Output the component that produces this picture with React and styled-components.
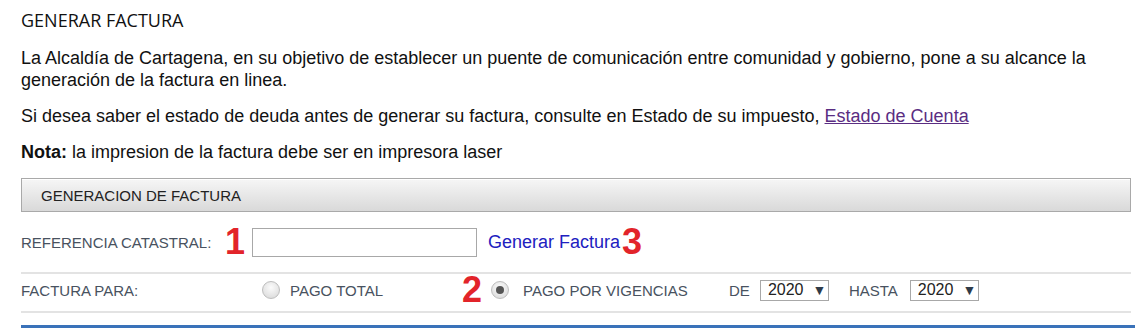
import React, { useState } from "react";
import styled, { createGlobalStyle } from "styled-components";

const Global = createGlobalStyle`
  body {
    margin: 0;
    background: #fff;
    font-family: "Liberation Sans", Arial, sans-serif;
    color: #111;
  }
`;

const Page = styled.div`
  padding: 10px 4px 0 21px;
`;

const Title = styled.h1`
  margin: 0;
  font-family: "Open Sans", "Liberation Sans", sans-serif;
  font-size: 18px;
  font-weight: 400;
  line-height: 20px;
  color: #111;
`;

const Para = styled.p`
  margin: ${p => p.$top || 14}px 0 0;
  font-size: 18px;
  line-height: 22px;
  max-width: 1100px;
`;

const Link = styled.a`
  color: #5a2d82;
  text-decoration: underline;
`;

const Panel = styled.div`
  margin-top: 15px;
`;

const PanelHead = styled.div`
  height: 32px;
  display: flex;
  align-items: center;
  padding-left: 19px;
  border: 1px solid #a9a9a9;
  background: linear-gradient(#f6f6f6, #d9d9d9);
  box-shadow: inset 0 1px 0 #fff;
  font-size: 15px;
  color: #222;
`;

const Row = styled.div`
  display: flex;
  align-items: center;
  height: ${p => p.$h}px;
  padding-bottom: ${p => p.$pb || 0}px;
  border-bottom: 2px solid #e3e3e3;
  font-size: 15px;
  color: #485260;
`;

const Label = styled.span`
  width: ${p => p.$w}px;
  flex: none;
`;

const Marker = styled.span`
  font-size: 36px;
  font-weight: 700;
  line-height: 1;
  color: #e2242a;
  margin: ${p => p.$m || "0"};
`;

const TextInput = styled.input`
  box-sizing: border-box;
  width: 225px;
  height: 29px;
  margin-left: 7px;
  border: 1px solid #a8a8a8;
  font-size: 14px;
  outline: none;
`;

const Action = styled.a`
  color: #2020c0;
  font-size: 18px;
  margin-left: 11px;
  text-decoration: none;
`;

const Radio = styled.span`
  box-sizing: border-box;
  width: 18px;
  height: 18px;
  border-radius: 50%;
  border: 1px solid #bdbdbd;
  background: radial-gradient(circle at 50% 35%, #fbfbfb, #d6d6d6);
  display: flex;
  align-items: center;
  justify-content: center;
  flex: none;
  &::after {
    content: "";
    width: 8px;
    height: 8px;
    border-radius: 50%;
    background: ${p => (p.$on ? "#555" : "transparent")};
  }
`;

const Option = styled.label`
  display: flex;
  align-items: center;
  gap: ${p => p.$gap}px;
  width: ${p => p.$w}px;
  cursor: pointer;
`;

const Caption = styled.span`
  margin: ${p => p.$m || "0"};
`;

const Select = styled.span`
  box-sizing: border-box;
  display: inline-flex;
  align-items: center;
  gap: 9px;
  flex: none;
  height: 21px;
  width: 69px;
  padding-left: 7px;
  border: 1px solid #a8a8a8;
  font-size: 16px;
  color: #222;
  overflow: hidden;
  &::after {
    content: "▼";
    font-size: 14px;
    color: #2f3b48;
  }
`;

const Bottom = styled.div`
  height: 3px;
  margin-top: 12px;
  margin-right: -4px;
  background: #3a72b9;
`;

export default function App() {
  const [mode, setMode] = useState("vig");
  return (
    <Page>
      <Global />
      <Title>GENERAR FACTURA</Title>
      <Para $top={17}>
        La Alcaldía de Cartagena, en su objetivo de establecer un puente de comunicación entre comunidad y gobierno, pone a su alcance la generación de la factura en linea.
      </Para>
      <Para>
        Si desea saber el estado de deuda antes de generar su factura, consulte en Estado de su impuesto, <Link href="#">Estado de Cuenta</Link>
      </Para>
      <Para>
        <b>Nota:</b> la impresion de la factura debe ser en impresora laser
      </Para>
      <Panel>
        <PanelHead>GENERACION DE FACTURA</PanelHead>
        <Row $h={60}>
          <Label $w={204}>REFERENCIA CATASTRAL:</Label>
          <Marker>1</Marker>
          <TextInput />
          <Action href="#">Generar Factura</Action>
          <Marker $m="0 0 0 2px">3</Marker>
        </Row>
        <Row $h={32} $pb={5}>
          <Label $w={241}>FACTURA PARA:</Label>
          <Option $w={200} $gap={10} onClick={() => setMode("total")}>
            <Radio $on={mode === "total"} />
            PAGO TOTAL
          </Option>
          <Marker $m="0 9px 0 0">2</Marker>
          <Option $w={238} $gap={14} onClick={() => setMode("vig")}>
            <Radio $on={mode === "vig"} />
            PAGO POR VIGENCIAS
          </Option>
          <Caption $m="0 10px 0 0">DE</Caption>
          <Select>2020</Select>
          <Caption $m="0 12px 0 20px">HASTA</Caption>
          <Select>2020</Select>
        </Row>
        <Bottom />
      </Panel>
    </Page>
  );
}
